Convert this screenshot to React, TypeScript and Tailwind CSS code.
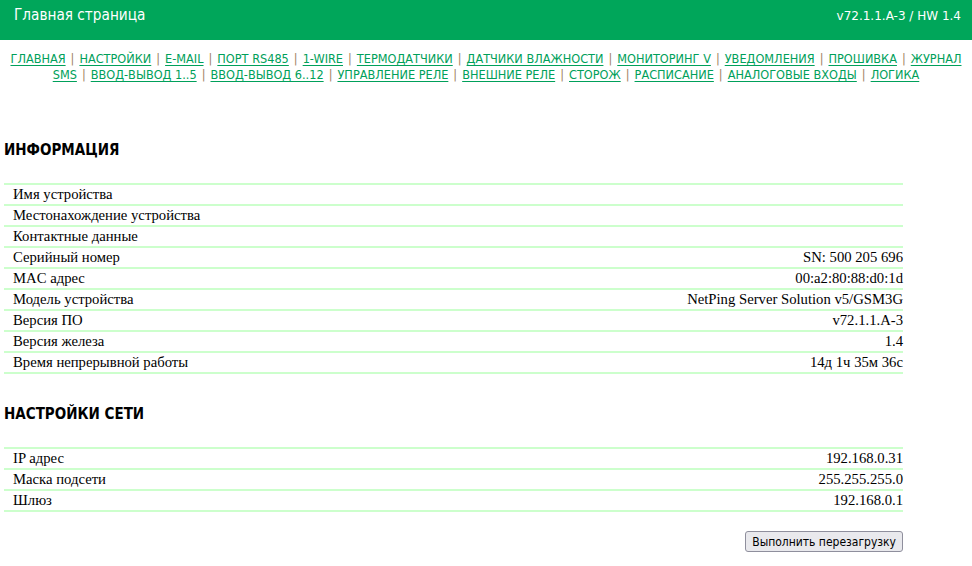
import React from 'react';

const line1 = [
  'ГЛАВНАЯ',
  'НАСТРОЙКИ',
  'E-MAIL',
  'ПОРТ RS485',
  '1-WIRE',
  'ТЕРМОДАТЧИКИ',
  'ДАТЧИКИ ВЛАЖНОСТИ',
  'МОНИТОРИНГ V',
  'УВЕДОМЛЕНИЯ',
  'ПРОШИВКА',
  'ЖУРНАЛ',
];

const line2 = [
  'SMS',
  'ВВОД-ВЫВОД 1..5',
  'ВВОД-ВЫВОД 6..12',
  'УПРАВЛЕНИЕ РЕЛЕ',
  'ВНЕШНИЕ РЕЛЕ',
  'СТОРОЖ',
  'РАСПИСАНИЕ',
  'АНАЛОГОВЫЕ ВХОДЫ',
  'ЛОГИКА',
];

const info: [string, string][] = [
  ['Имя устройства', ''],
  ['Местонахождение устройства', ''],
  ['Контактные данные', ''],
  ['Серийный номер', 'SN: 500 205 696'],
  ['MAC адрес', '00:a2:80:88:d0:1d'],
  ['Модель устройства', 'NetPing Server Solution v5/GSM3G'],
  ['Версия ПО', 'v72.1.1.A-3'],
  ['Версия железа', '1.4'],
  ['Время непрерывной работы', '14д 1ч 35м 36с'],
];

const network: [string, string][] = [
  ['IP адрес', '192.168.0.31'],
  ['Маска подсети', '255.255.255.0'],
  ['Шлюз', '192.168.0.1'],
];

function NavLine({ items }: { items: string[] }) {
  return (
    <div className="text-center leading-[16px] whitespace-nowrap">
      {items.map((t, i) => (
        <React.Fragment key={t}>
          <a href="#" className="text-[#00a05a] underline underline-offset-2">
            {t}
          </a>
          {i < items.length - 1 && <span className="text-[#a08060] mx-[5px]">|</span>}
        </React.Fragment>
      ))}
    </div>
  );
}

function Table({ rows }: { rows: [string, string][] }) {
  return (
    <div className="w-[899px] border-t-2 border-[#ccffcc] font-stretch-normal" style={{ fontFamily: '"Liberation Serif", serif' }}>
      {rows.map(([k, v]) => (
        <div key={k} className="flex justify-between h-[21px] items-center border-b-2 border-[#ccffcc] pl-[9px] text-[14.7px] text-black">
          <span>{k}</span>
          <span>{v}</span>
        </div>
      ))}
    </div>
  );
}

export default function App() {
  return (
    <div className="w-[972px] h-[566px] bg-white font-stretch-condensed" style={{ fontFamily: '"DejaVu Sans", Verdana, sans-serif' }}>
      <div className="h-[40px] bg-[#00a65a] text-white flex justify-between items-start pt-[3px] pl-[14px] pr-[11px]">
        <div className="text-[15.2px] leading-[24px]">Главная страница</div>
        <div className="text-[12px] pt-[4px] font-stretch-normal">v72.1.1.A-3 / HW 1.4</div>
      </div>

      <div className="pt-[11px] text-[12.6px]">
        <NavLine items={line1} />
        <NavLine items={line2} />
      </div>

      <div className="pl-[4px]">
        <h2 className="font-bold text-[15px] leading-[20px] text-black mt-[57px] mb-[23px]">ИНФОРМАЦИЯ</h2>
        <Table rows={info} />

        <h2 className="font-bold text-[15px] leading-[20px] text-black mt-[30px] mb-[23px]">НАСТРОЙКИ СЕТИ</h2>
        <Table rows={network} />

        <div className="w-[899px] flex justify-end mt-[19px]">
          <button className="text-[12px] px-[6px] h-[21px] border border-[#8f8f9d] rounded-[3px] bg-[#e9e9ed] text-black">
            Выполнить перезагрузку
          </button>
        </div>
      </div>
    </div>
  );
}
